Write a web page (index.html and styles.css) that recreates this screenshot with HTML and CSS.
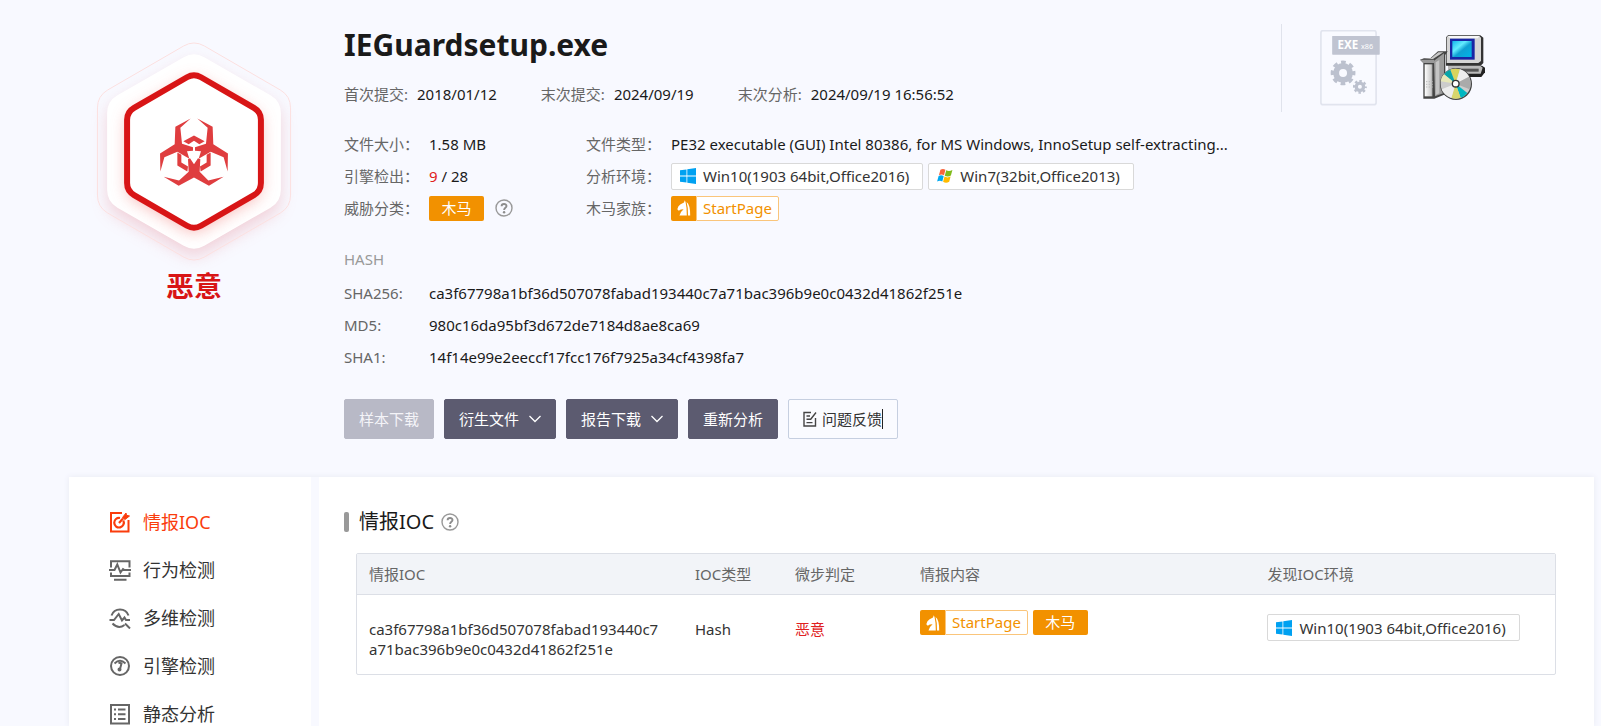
FILE: index.html
```html
<!DOCTYPE html>
<html lang="zh-CN">
<head>
<meta charset="utf-8">
<title>IEGuardsetup.exe</title>
<link rel="stylesheet" href="styles.css">
</head>
<body>
<svg class="defs" width="0" height="0" aria-hidden="true">
  <symbol id="help" viewBox="0 0 18 18"><circle cx="9" cy="9" r="8" fill="none" stroke="#999" stroke-width="1.4"/><path d="M6.600 7.200c0-3 4.900-3 4.900-.1 0 1.700-2.400 1.800-2.400 3.900" fill="none" stroke="#8c8c8c" stroke-width="1.900"/><circle cx="9.100" cy="13.200" r="1.200" fill="#8c8c8c"/></symbol>
  <symbol id="win10" viewBox="0 0 16 16"><path d="M0 2.300 6.500 1.400v6.200H0zM7.300 1.300 16 0v7.600H7.300zM0 8.400h6.500v6.200L0 13.700zM7.300 8.400H16V16l-8.700-1.300z" fill="#00a1f1"/></symbol>
  <symbol id="win7" viewBox="0 0 16 16"><path d="M3.400 1.800Q6 .2 8.400 1.800L7 7.200Q4.400 5.600 1.900 7.200z" fill="#f8643c"/><path d="M9.200 2.300Q12 3.900 15.400 2.100L13.900 7.500Q11 9.200 7.800 7.700z" fill="#80bb1c"/><path d="M1.600 8Q4.300 6.600 6.700 8.200L5.300 13.400Q3 11.900.1 13.400z" fill="#00a8f0"/><path d="M7.500 8.600Q10.400 10.200 13.600 8.600L12.200 13.800Q9 15.500 6.100 13.800z" fill="#ffbb00"/></symbol>
  <symbol id="horse" viewBox="0 0 14 16"><path d="M7.800.2 8.600 2.200Q10 8 9.800 15.500H2.500Q3 12.200 6.600 9.300L3.800 9.400 1.800 10.800.3 9.300Q1 5.500 3.600 4.200L7 2.600z" fill="#fff"/><path d="M9.600 2Q13.200 4.500 13.200 15.500H11Q11.300 7.500 9.600 2z" fill="#fff"/></symbol>
</svg>

<main class="page">
  <header class="hero">
    <section class="verdict">
      <svg class="badge" viewBox="0 0 780 760" aria-hidden="true">
        <defs>
          <filter id="soft" x="-30%" y="-30%" width="160%" height="160%"><feGaussianBlur stdDeviation="24"/></filter>
        </defs>
        <path d="M371 112Q402 94 433 112L632 226Q663 244 663 280V510Q663 546 632 564L433 678Q402 696 371 678L172 564Q141 546 141 510V280Q141 244 172 226Z" transform="translate(0 24)" fill="#e7919c" opacity=".36" filter="url(#soft)"/>
        <path d="M371 78Q402 60 433 78L661 210Q692 228 692 264V526Q692 562 661 580L433 712Q402 730 371 712L143 580Q112 562 112 526V264Q112 228 143 210Z" fill="none" stroke="#fce0e0" stroke-width="3"/>
        <path d="M371 112Q402 94 433 112L632 226Q663 244 663 280V510Q663 546 632 564L433 678Q402 696 371 678L172 564Q141 546 141 510V280Q141 244 172 226Z" fill="#fff"/>
        <path d="M381 172Q402 160 423 172L582 264Q603 276 603 300V490Q603 514 582 526L423 618Q402 630 381 618L222 526Q201 514 201 490V300Q201 276 222 264Z" transform="translate(0 12)" fill="#f59f9b" opacity=".75" filter="url(#soft)"/>
        <path d="M381 172Q402 160 423 172L582 264Q603 276 603 300V490Q603 514 582 526L423 618Q402 630 381 618L222 526Q201 514 201 490V300Q201 276 222 264Z" fill="#fff" stroke="#d81516" stroke-width="18"/>
        <g fill="#df3d3f">
          <path d="M392 296 346 321 344 373 300 401 301 455 313 412 352 396 388 417 381 394 399 393V382L366 372 361 324Z"/>
          <path d="M412 296 458 321 460 373 504 401 503 455 491 412 452 396 416 417 423 394 405 393V382L438 372 443 324Z"/>
          <path d="M311 471 356 498 402 473 447 498 491 471 445 482 419 456 421 418 414 415 402 433 390 415 384 418 386 456 357 482Z"/>
          <path d="M370 364 402 347 434 364 418 373 402 363 386 373ZM352 398 364 405V428L384 440 382 455 352 437ZM452 398 440 405V428L420 440 422 455 452 437Z"/>
        </g>
      </svg>
      <strong class="verdict-label">恶意</strong>
    </section>

    <section class="info">
      <h1>IEGuardsetup.exe</h1>
      <dl class="dates">
        <div><dt>首次提交:</dt><dd>2018/01/12</dd></div>
        <div><dt>末次提交:</dt><dd>2024/09/19</dd></div>
        <div><dt>末次分析:</dt><dd>2024/09/19 16:56:52</dd></div>
      </dl>
      <dl class="facts">
        <dt>文件大小：</dt><dd>1.58 MB</dd>
        <dt>文件类型：</dt><dd>PE32 executable (GUI) Intel 80386, for MS Windows, InnoSetup self-extracting...</dd>
        <dt>引擎检出：</dt><dd><span><span class="red">9</span> / 28</span></dd>
        <dt>分析环境：</dt><dd><span class="env"><svg><use href="#win10"/></svg>Win10(1903 64bit,Office2016)</span><span class="env"><svg><use href="#win7"/></svg>Win7(32bit,Office2013)</span></dd>
        <dt>威胁分类：</dt><dd><span class="threat">木马</span><svg class="help"><use href="#help"/></svg></dd>
        <dt>木马家族：</dt><dd><span class="family"><span class="family-icon"><svg><use href="#horse"/></svg></span><span class="family-name">StartPage</span></span></dd>
      </dl>
      <h2 class="hash-title">HASH</h2>
      <dl class="hashes">
        <dt>SHA256:</dt><dd>ca3f67798a1bf36d507078fabad193440c7a71bac396b9e0c0432d41862f251e</dd>
        <dt>MD5:</dt><dd>980c16da95bf3d672de7184d8ae8ca69</dd>
        <dt>SHA1:</dt><dd>14f14e99e2eeccf17fcc176f7925a34cf4398fa7</dd>
      </dl>
      <div class="actions">
        <button class="btn" disabled>样本下载</button>
        <button class="btn">衍生文件<svg class="chevron" viewBox="0 0 12 8"><path d="M.5 1 6 6.500 11.500 1"/></svg></button>
        <button class="btn">报告下载<svg class="chevron" viewBox="0 0 12 8"><path d="M.5 1 6 6.500 11.500 1"/></svg></button>
        <button class="btn">重新分析</button>
        <button class="btn btn-outline"><svg class="note" viewBox="0 0 14 16"><path d="M8 1.500H1v13.500h11.500V7M3.500 5H7M3.500 8.300h4M3.500 11.600h6M7.500 8.500 13 1.500"/></svg><span class="editing">问题反馈</span></button>
      </div>
    </section>

    <aside class="file-icons">
      <svg class="exe" viewBox="0 0 180 230" role="img" aria-label="EXE x86">
        <rect x="2" y="2" width="167" height="224" rx="6" fill="#f9faff" stroke="#e1e4ee" stroke-width="5"/>
        <rect x="36" y="18" width="144" height="57" rx="2" fill="#c0c4d1"/>
        <text x="52" y="59" class="exe-text">EXE</text><text x="123" y="59" class="exe-arch">x86</text>
        <g fill="none" stroke="#bcc1ce">
          <circle cx="69" cy="130" r="21" stroke-width="18"/><circle cx="69" cy="130" r="32" stroke-width="11" stroke-dasharray="14 11.130" stroke-dashoffset="7"/>
          <circle cx="120" cy="172" r="11" stroke-width="10"/><circle cx="120" cy="172" r="17.500" stroke-width="7" stroke-dasharray="7.500 6.240" stroke-dashoffset="3.700"/>
        </g>
      </svg>
      <svg class="installer" viewBox="0 0 195 195" aria-hidden="true">
        <defs>
          <linearGradient id="screen" x1="0" y1="0" x2="1" y2="1"><stop offset="0" stop-color="#12b6ec"/><stop offset=".35" stop-color="#63ecff"/><stop offset=".55" stop-color="#0fa0d4"/><stop offset="1" stop-color="#00b4e8"/></linearGradient>
          <linearGradient id="case" x1="0" y1="0" x2="1" y2="0"><stop offset="0" stop-color="#fff"/><stop offset=".8" stop-color="#c8c8c8"/><stop offset="1" stop-color="#444"/></linearGradient>
        </defs>
        <path d="M84 92H186L195 98V112L184 126H120Z" fill="#222"/><path d="M84 90H178L188 98 182 116H84Z" fill="#bbb"/><path d="M105 101H176V110H105Z" fill="#555"/>
        <path d="M84 1H181L190 8V84L182 92H78V7Z" fill="#333"/><path d="M84 3H178L183 8V78L175 84H80V7Z" fill="#d5d5d5"/><path d="M84 3H179L173 10H90Z" fill="#f7f7f7"/>
        <rect x="90" y="11" width="74" height="63" fill="#1825a5"/><rect x="97" y="18" width="58" height="48" fill="url(#screen)"/>
        <path d="M0 74 12 70H31L54 49H83L76 60V178L43 191H10V84Z" fill="#444"/>
        <path d="M1 74H42V84H10Z" fill="#999"/><path d="M14 88H39V184H14Z" fill="url(#case)"/><path d="M42 77 72 55V174L45 184Z" fill="#9b9b9b"/><path d="M47 82 58 75V175L47 180Z" fill="#c4c4c4"/><path d="M12 72H39L70 52H55L33 70Z" fill="#c8c8c8"/>
        <path d="M18 140h4m4 0h4m4 0h4M18 148h4m4 0h4m4 0h4M18 156h4m4 0h4m4 0h4" stroke="#bbb" stroke-width="3"/>
        <circle cx="108" cy="147" r="48" fill="#444"/><circle cx="107" cy="146" r="45" fill="#ccc"/>
        <path d="M107 146 91 104Q104 99 120 103Z" fill="#d9d45d"/><path d="M107 146 72 118Q79 108 91 104Z" fill="#08a5a9"/><path d="M107 146 62 139Q64 125 72 118Z" fill="#e6e7b8"/><path d="M107 146 120 103Q139 109 147 125Z" fill="#eee"/><path d="M107 146 147 125Q155 141 149 163Z" fill="#aaa"/><path d="M107 146 142 174Q133 186 122 189Z" fill="#00b7c1"/><path d="M107 146 122 189Q106 193 94 189Z" fill="#d7d56b"/><path d="M107 146 94 189Q72 180 65 163Z" fill="#ededed"/>
        <circle cx="107" cy="146" r="12" fill="#333"/><circle cx="107" cy="146" r="8" fill="#fff"/>
      </svg>
    </aside>
  </header>

  <div class="panel">
    <nav class="side">
      <a href="#ioc" class="active"><svg viewBox="0 0 22 22"><path d="M13 2H2V20.500H19.500V9"/><path d="M14.300 9.500A4.800 4.800 0 1 1 11 7" stroke-width="2.200"/><path d="M10 12 14 7.500" stroke-width="2.200"/><path d="M13.500 6.500 17 2 17.500 4.300 20.500 5 16 8.500Z" fill="currentColor" stroke-width="1"/></svg>情报IOC</a>
      <a href="#behavior"><svg viewBox="0 0 22 22"><path d="M2 8.500V2.200H20.500V8.500M2 13.500V17H20.500V13.500M0 11H5.500L8.300 5.500 11.500 13.500 14 10 15.500 11H22M5 20.800H17.500"/></svg>行为检测</a>
      <a href="#multi"><svg viewBox="0 0 22 22"><path d="M2.500 8.500A9 9 0 0 1 19.500 8.500M.5 13H5L9.700 7 13 13.500 15.500 10.500 17 13H21M3.500 16.500Q9.500 22.500 15.500 18M16 16.500 21 21.500"/></svg>多维检测</a>
      <a href="#engine"><svg viewBox="0 0 22 22"><circle cx="11" cy="11" r="9"/><path d="M5.500 8.500Q11 3 16.500 8.500M9.500 7.500 12.500 8.500 11 14"/><circle cx="10.500" cy="14.500" r="1" fill="currentColor"/></svg>引擎检测</a>
      <a href="#static"><svg viewBox="0 0 22 22"><path d="M2 2H20V20.500H2ZM5 6.500H7M9 6.500H16.500M5 11.300H7M9 11.300H16.500M5 16H7M9 16H16.500"/></svg>静态分析</a>
    </nav>
    <section class="content" id="ioc">
      <h2 class="section-title">情报IOC<svg class="help"><use href="#help"/></svg></h2>
      <table>
        <colgroup><col class="c-ioc"><col class="c-type"><col class="c-verdict"><col class="c-intel"><col class="c-env"></colgroup>
        <thead><tr><th>情报IOC</th><th>IOC类型</th><th>微步判定</th><th>情报内容</th><th>发现IOC环境</th></tr></thead>
        <tbody><tr>
          <td class="text-cell hash-cell">ca3f67798a1bf36d507078fabad193440c7a71bac396b9e0c0432d41862f251e</td>
          <td class="text-cell">Hash</td>
          <td class="text-cell red">恶意</td>
          <td class="tag-cell"><div class="tags"><span class="family"><span class="family-icon"><svg><use href="#horse"/></svg></span><span class="family-name">StartPage</span></span><span class="threat">木马</span></div></td>
          <td class="env-cell"><div class="tags"><span class="env"><svg><use href="#win10"/></svg>Win10(1903 64bit,Office2016)</span></div></td>
        </tr></tbody>
      </table>
    </section>
  </div>
</main>
</body>
</html>
```
FILE: styles.css
```css
* { box-sizing: border-box; }
body {
  margin: 0;
  background: #f8f9ff;
  color: #1a1a1a;
  font: 15px/20px "Noto Sans", "Noto Sans CJK SC", sans-serif;
}
h1, h2, dl, dd { margin: 0; }
.defs { position: absolute; }
.page {
  display: flex;
  flex-direction: column;
  height: 100vh;
  padding: 0 7px 0 69px;
  overflow: hidden;
}

.hero {
  display: flex;
  padding-bottom: 38px;
}
.verdict {
  display: flex;
  flex-direction: column;
  align-items: center;
  flex: none;
  width: 250px;
  padding-top: 20px;
  margin-right: 25px;
}
.badge { width: 260px; height: 253px; margin-left: -8px; }
.verdict-label {
  margin-top: -7px;
  color: #d81516;
  font-size: 28px;
  line-height: 40px;
}
.info { flex: 1; min-width: 0; padding-top: 24px; }
h1 { font-size: 30px; line-height: 42px; }

dt { color: #666; }
dd { display: flex; align-items: center; gap: 5px; white-space: nowrap; }
.dates { display: flex; gap: 44px; margin-top: 18px; }
.dates div { display: flex; gap: 9px; }
.facts {
  display: grid;
  grid-template-columns: 85px 157px 85px 1fr;
  grid-auto-rows: 32px;
  align-items: center;
  margin-top: 24px;
}
.facts dd { min-width: 0; }
.red { color: #e02020; }

.env {
  display: flex;
  align-items: center;
  gap: 7px;
  height: 27px;
  padding: 0 13px 0 8px;
  border: 1px solid #d9d9d9;
  border-radius: 2px;
  background: #fff;
  color: #333;
  white-space: nowrap;
}
.env svg { width: 16px; height: 16px; }
.threat {
  min-width: 55px;
  height: 25px;
  border-radius: 2px;
  background: #f29100;
  color: #fff;
  line-height: 25px;
  text-align: center;
}
.help { width: 18px; height: 18px; }
.facts .help { margin-left: 6px; }
.family { display: flex; height: 25px; }
.family-icon {
  display: grid;
  place-items: center;
  width: 25px;
  border-radius: 2px 0 0 2px;
  background: #f29100;
}
.family-icon svg { width: 14px; height: 16px; }
.family-name {
  padding: 0 6px;
  border: 1px solid #fac57b;
  border-radius: 0 2px 2px 0;
  background: #fff;
  color: #f29100;
  line-height: 23px;
}

.hash-title {
  margin-top: 25px;
  color: #999;
  font-size: 15px;
  font-weight: 400;
  line-height: 20px;
}
.hashes {
  display: grid;
  grid-template-columns: 85px 1fr;
  grid-auto-rows: 32px;
  align-items: center;
  margin-top: 8px;
}
.actions { display: flex; gap: 10px; margin-top: 26px; }
.btn {
  display: flex;
  align-items: center;
  height: 40px;
  padding: 0 14px;
  border: 1px solid #5c5b70;
  border-radius: 2px;
  background: #5c5b70;
  color: #fff;
  font: inherit;
  white-space: nowrap;
}
.btn:disabled { border-color: #b8b9c6; background: #b8b9c6; color: #f4f4f8; }
.chevron { width: 12px; height: 8px; margin-left: 10px; fill: none; stroke: #fff; stroke-width: 1.3; }
.btn-outline { gap: 5px; border-color: #c6cfe0; background: #fafbff; color: #333; }
.note { width: 14px; height: 16px; fill: none; stroke: #444; stroke-width: 1.4; }
.editing { border-right: 1px solid #222; }

.file-icons {
  display: flex;
  flex: none;
  gap: 40px;
  height: 88px;
  margin-top: 24px;
  padding: 6px 109px 0 38px;
  border-left: 1px solid #e0e3ec;
}
.exe { width: 60px; height: 76px; }
.exe-text { fill: #fff; font: 700 35px "Noto Sans", sans-serif; }
.exe-arch { fill: #fff; font: 22px "Noto Sans", sans-serif; }
.installer { width: 65px; height: 65px; margin-top: 5px; }

.panel {
  display: flex;
  flex: 1;
  gap: 8px;
  min-height: 0;
  box-shadow: 0 0 6px #e8eaf2;
}
.side {
  flex: none;
  width: 242px;
  padding: 21px 0 0 40px;
  background: #fff;
}
.side a {
  display: flex;
  align-items: center;
  gap: 12px;
  height: 48px;
  color: #333;
  font-size: 18px;
  text-decoration: none;
}
.side svg { width: 22px; height: 22px; fill: none; stroke: #666; stroke-width: 2; color: #666; }
.side .active { color: #fa3c0c; }
.side .active svg { color: #fa3c0c; stroke: #fa3c0c; }
.content { flex: 1; min-width: 0; padding: 30px 38px 0 25px; background: #fff; }
.section-title {
  display: flex;
  align-items: center;
  font-size: 20px;
  font-weight: 400;
  line-height: 30px;
}
.section-title::before {
  width: 5px;
  height: 20px;
  margin-right: 10px;
  border-radius: 2px;
  background: #999;
  content: "";
}
.section-title .help { margin-left: 7px; }
table {
  width: calc(100% - 12px);
  margin: 16px 0 0 12px;
  table-layout: fixed;
  border: 1px solid #dcdfe6;
  border-radius: 2px;
  border-spacing: 0;
}
.c-ioc { width: 326px; }
.c-type { width: 100px; }
.c-verdict { width: 125px; }
.c-intel { width: 29%; }
th {
  height: 41px;
  padding: 0 12px;
  border-bottom: 1px solid #dcdfe6;
  background: #f2f4f8;
  color: #666;
  font-weight: 400;
  text-align: left;
}
td { height: 79px; padding: 15px 12px 0; color: #333; vertical-align: top; }
.text-cell { padding-top: 24px; overflow-wrap: anywhere; }
.hash-cell { padding-right: 20px; }
td.red { color: #e02020; }
.env-cell { padding-top: 19px; }
.tags { display: flex; gap: 5px; }
```
